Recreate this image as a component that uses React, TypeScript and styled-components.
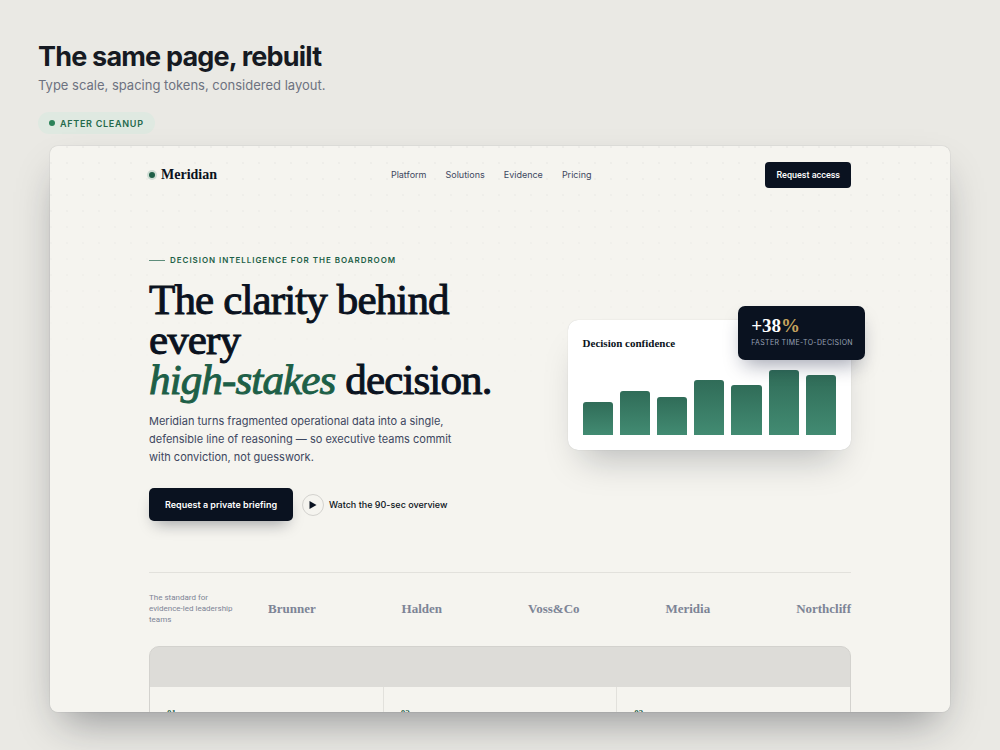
import React from "react";
import styled, { createGlobalStyle } from "styled-components";

const serif = `"Liberation Serif", "Times New Roman", serif`;
const sans = `Inter, "Liberation Sans", sans-serif`;
const grotesque = `Roboto, "Liberation Sans", sans-serif`;

const ink = "#0a1220";
const green = "#1d5f47";
const slate = "#3d4760";
const muted = "#7d8496";
const paper = "#f5f4ef";
const rule = "#e2e1dc";

const GlobalStyle = createGlobalStyle`
  *, *::before, *::after { box-sizing: border-box; }
  body { margin: 0; background: #eae9e4; font-family: ${sans}; color: ${ink}; }
  h1, h2, h3, p, ul { margin: 0; padding: 0; }
  ul { list-style: none; }
  a { color: inherit; text-decoration: none; }
  button { font-family: inherit; border: 0; cursor: pointer; }
`;

const Page = styled.div`
  display: flex;
  flex-direction: column;
  height: 100vh;
  min-height: 560px;
  padding: 41px 50px 38px;
  overflow: hidden;
`;

const Intro = styled.header`
  display: flex;
  flex-direction: column;
  align-items: flex-start;
  margin-left: -12px;
`;

const IntroTitle = styled.h1`
  font-size: 27px;
  line-height: 32px;
  font-weight: 700;
  letter-spacing: -0.03em;
  color: #161a22;
`;

const IntroText = styled.p`
  margin-top: 2px;
  font-size: 13px;
  line-height: 20px;
  color: #6d7280;
`;

const Tag = styled.span`
  display: flex;
  align-items: center;
  gap: 5px;
  height: 22px;
  margin: 17px 0 12px;
  padding: 0 11px;
  border-radius: 11px;
  background: #dfe9e1;
  color: #246a4c;
  font-size: 9px;
  font-weight: 600;
  letter-spacing: 0.08em;
  text-transform: uppercase;

  &::before {
    content: "";
    width: 6px;
    height: 6px;
    border-radius: 50%;
    background: #2c8259;
  }
`;

const Frame = styled.div`
  position: relative;
  flex: 1;
  min-height: 0;
  overflow: hidden;
  padding: 16px 11% 0;
  border-radius: 8px;
  background: ${paper};
`;

const FrameShadow = styled.div`
  display: flex;
  flex: 1;
  flex-direction: column;
  min-height: 0;
  border-radius: 8px;
  box-shadow: 0 0 1px rgba(20, 25, 35, 0.35), 0 20px 40px -12px rgba(20, 25, 35, 0.42);
`;

const DotGrid = styled.div`
  position: absolute;
  inset: 0;
  background-image: radial-gradient(circle at 1px 1px, rgba(10, 18, 32, 0.03) 1px, transparent 1px);
  background-size: 16px 16px;
  mask-image: linear-gradient(#000, transparent 45%);
  pointer-events: none;
`;

const Content = styled.div`
  position: relative;
`;

const Nav = styled.nav`
  display: flex;
  align-items: center;
  justify-content: space-between;
`;

const Brand = styled.a`
  display: flex;
  align-items: center;
  gap: 6px;
  font: 700 14px/18px ${serif};

  &::before {
    content: "";
    width: 6px;
    height: 6px;
    border-radius: 50%;
    background: ${green};
    box-shadow: 0 0 0 2px #cfddd4;
  }
`;

const NavLinks = styled.ul`
  display: flex;
  gap: 19px;
  font-size: 9px;
  line-height: 16px;
  color: ${slate};
`;

const PrimaryButton = styled.button<{ $large?: boolean }>`
  height: ${(p) => (p.$large ? 33 : 26)}px;
  padding: 0 ${(p) => (p.$large ? 16 : 11)}px;
  border-radius: ${(p) => (p.$large ? 5 : 4)}px;
  background: ${ink};
  color: #fff;
  font-family: ${(p) => (p.$large ? sans : grotesque)};
  font-size: 9px;
  font-weight: ${(p) => (p.$large ? 600 : 500)};
  white-space: nowrap;
  box-shadow: ${(p) => (p.$large ? "0 8px 16px -6px rgba(10, 18, 32, 0.4)" : "none")};
`;

const Hero = styled.section`
  display: grid;
  grid-template-columns: 135fr 100fr;
  column-gap: 36px;
  align-items: center;
  padding: 61px 0 51px;
`;

const Eyebrow = styled.p`
  display: flex;
  align-items: center;
  gap: 5px;
  font-size: 8px;
  line-height: 22px;
  font-weight: 600;
  letter-spacing: 0.12em;
  text-transform: uppercase;
  color: ${green};

  &::before {
    content: "";
    width: 16px;
    height: 1px;
    background: #5e8d7b;
  }
`;

const Headline = styled.h2`
  margin-top: 9px;
  font: 400 43px/40px ${serif};
  letter-spacing: -0.02em;
  -webkit-text-stroke: 1px currentColor;

  em { color: ${green}; }
`;

const Lead = styled.p`
  max-width: 320px;
  margin-top: 12px;
  font-size: 11px;
  line-height: 18px;
  color: ${slate};
`;

const Actions = styled.div`
  display: flex;
  align-items: center;
  gap: 9px;
  margin-top: 22px;
`;

const WatchButton = styled.button`
  display: flex;
  align-items: center;
  gap: 5px;
  padding: 0;
  background: none;
  color: ${ink};
  font-size: 9px;
  font-weight: 500;
  white-space: nowrap;
`;

const PlayRing = styled.span`
  display: grid;
  place-items: center;
  width: 22px;
  height: 22px;
  border: 1px solid #d3d2ce;
  border-radius: 50%;
`;

const ChartCard = styled.section`
  position: relative;
  padding: 15px;
  border-radius: 10px;
  background: #fff;
  box-shadow: 0 0 1px rgba(10, 18, 32, 0.2), 0 22px 36px -14px rgba(10, 18, 32, 0.26);
`;

const ChartTitle = styled.h3`
  font: 700 11px/16px ${serif};
`;

const Bars = styled.div`
  display: flex;
  align-items: flex-end;
  gap: 7px;
  height: 68px;
  margin-top: 16px;
`;

const Bar = styled.div`
  flex: 1;
  border-radius: 3px 3px 0 0;
  background: linear-gradient(#306c58, #428b72);
`;

const StatBadge = styled.div`
  position: absolute;
  top: -14px;
  right: -14px;
  padding: 10px 12px 11px 13px;
  border-radius: 7px;
  background: ${ink};
  color: #fff;
  box-shadow: 0 10px 20px -6px rgba(10, 18, 50, 0.4);
`;

const StatValue = styled.p`
  font: 700 19px/20px ${serif};

  span { color: #c6a35d; }
`;

const StatLabel = styled.p`
  margin-top: 1px;
  font-size: 7px;
  line-height: 12px;
  letter-spacing: 0.05em;
  text-transform: uppercase;
  white-space: nowrap;
  color: #98a1b5;
`;

const Proof = styled.section`
  display: flex;
  align-items: center;
  gap: 30px;
  padding: 19px 0 21px;
  border-top: 1px solid ${rule};
`;

const ProofNote = styled.p`
  width: 89px;
  font-family: ${grotesque};
  font-size: 8px;
  line-height: 11px;
  color: ${muted};
`;

const Clients = styled.ul`
  display: flex;
  flex: 1;
  justify-content: space-between;
  font: 700 13px/18px ${serif};
  color: ${muted};
`;

const Features = styled.section`
  overflow: hidden;
  border: 1px solid #d3d2ce;
  border-radius: 10px;
  background: #dddcd8;
`;

const FeatureGrid = styled.div`
  display: grid;
  grid-template-columns: repeat(3, 1fr);
  gap: 1px;
  margin-top: 40px;
  background: ${rule};
`;

const Feature = styled.article`
  min-height: 110px;
  padding: 20px 17px;
  background: ${paper};
`;

const FeatureNumber = styled.span`
  display: block;
  font: 700 9px/12px ${serif};
  color: ${green};
`;

const links = ["Platform", "Solutions", "Evidence", "Pricing"];
const bars = [33, 44, 38, 55, 50, 65, 60];
const clients = ["Brunner", "Halden", "Voss&Co", "Meridia", "Northcliff"];
const features = ["01", "02", "03"];

export default function App() {
  return (
    <Page>
      <GlobalStyle />
      <Intro>
        <IntroTitle>The same page, rebuilt</IntroTitle>
        <IntroText>Type scale, spacing tokens, considered layout.</IntroText>
        <Tag>After cleanup</Tag>
      </Intro>
      <FrameShadow>
        <Frame>
          <DotGrid />
          <Content>
            <Nav>
              <Brand href="#">Meridian</Brand>
              <NavLinks>
                {links.map((l) => (
                  <li key={l}><a href="#">{l}</a></li>
                ))}
              </NavLinks>
              <PrimaryButton>Request access</PrimaryButton>
            </Nav>
            <Hero>
              <div>
                <Eyebrow>Decision intelligence for the boardroom</Eyebrow>
                <Headline>
                  The clarity behind every<br />
                  <em>high-stakes</em> decision.
                </Headline>
                <Lead>
                  Meridian turns fragmented operational data into a single, defensible line of
                  reasoning — so executive teams commit with conviction, not guesswork.
                </Lead>
                <Actions>
                  <PrimaryButton $large>Request a private briefing</PrimaryButton>
                  <WatchButton>
                    <PlayRing>
                      <svg width="8" height="8" viewBox="0 0 8 8" aria-hidden="true">
                        <path d="M0.5 0 L7.5 4 L0.5 8 Z" fill={ink} />
                      </svg>
                    </PlayRing>
                    Watch the 90-sec overview
                  </WatchButton>
                </Actions>
              </div>
              <ChartCard>
                <ChartTitle>Decision confidence</ChartTitle>
                <Bars>
                  {bars.map((h, i) => (
                    <Bar key={i} style={{ height: h }} />
                  ))}
                </Bars>
                <StatBadge>
                  <StatValue>+38<span>%</span></StatValue>
                  <StatLabel>Faster time-to-decision</StatLabel>
                </StatBadge>
              </ChartCard>
            </Hero>
            <Proof>
              <ProofNote>The standard for evidence-led leadership teams</ProofNote>
              <Clients>
                {clients.map((c) => (
                  <li key={c}>{c}</li>
                ))}
              </Clients>
            </Proof>
            <Features>
              <FeatureGrid>
                {features.map((n) => (
                  <Feature key={n}>
                    <FeatureNumber>{n}</FeatureNumber>
                  </Feature>
                ))}
              </FeatureGrid>
            </Features>
          </Content>
        </Frame>
      </FrameShadow>
    </Page>
  );
}
